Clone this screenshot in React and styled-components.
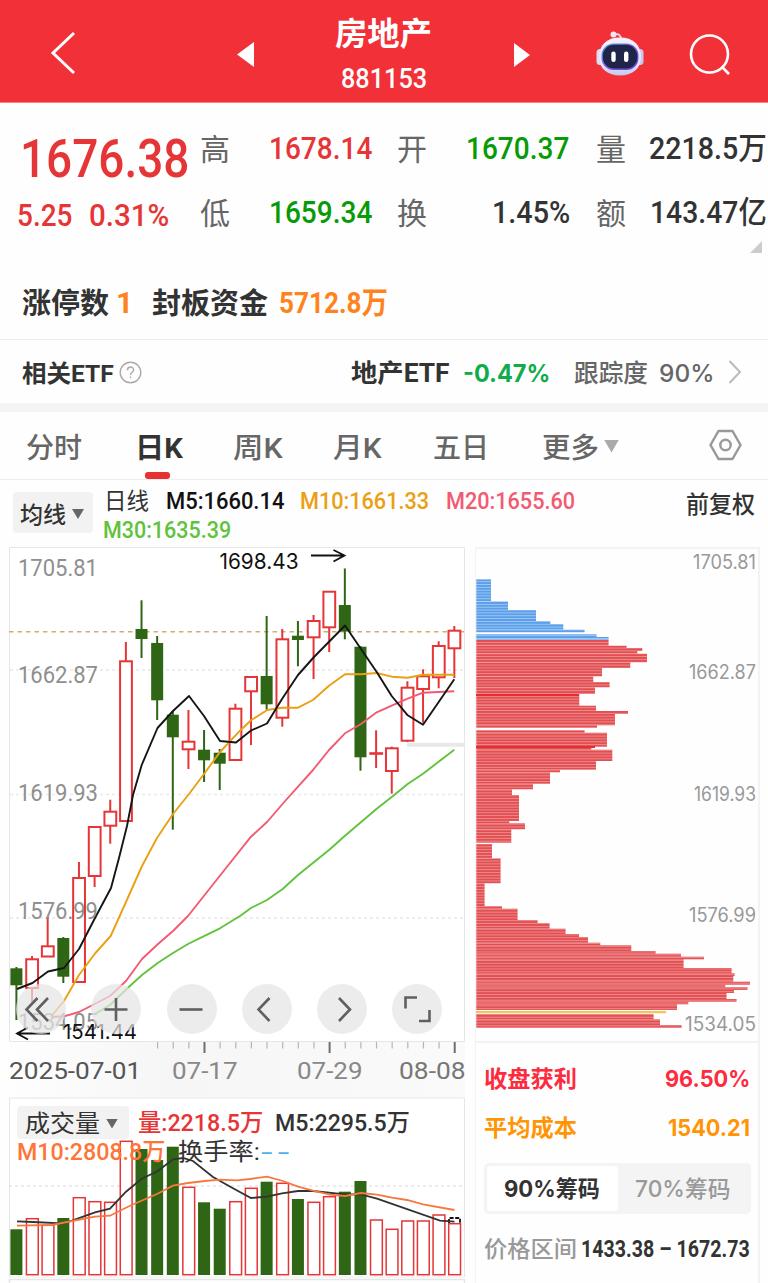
import React, { useLayoutEffect, useRef, useState } from "react"
import styled, { createGlobalStyle } from "styled-components"

const DIN = `Roboto, "Noto Sans CJK SC", sans-serif`
const ROUND = `Inter, "Noto Sans CJK SC", sans-serif`

const GlobalStyle = createGlobalStyle`
* { box-sizing: border-box; }
body {
  margin: 0;
  background: #fff;
  overflow: hidden;
}
svg { display: block; overflow: visible; }
`

const Page = styled.div`
width: 768px;
height: 1283px;
overflow: hidden;
background: #fefefe;
font-family: ${DIN};
`

const FitBox = styled.span`
display: block;
flex: none;
width: ${p => p.$w}px;
height: ${p => p.$size}px;
margin-left: ${p => p.$ml || 0}px;
margin-top: ${p => p.$mt || 0}px;
line-height: ${p => p.$size}px;
font-family: ${p => (p.$round ? ROUND : DIN)};
font-size: ${p => p.$size}px;
font-weight: ${p => p.$weight || 400};
letter-spacing: ${p => p.$gap || 0}px;
color: ${p => p.$color || "#333"};
white-space: nowrap;
`
const FitInner = styled.span`
display: inline-block;
transform-origin: 0 50%;
`

// squeezes or widens a label so it always fills its slot
function Fit({ w, size, weight, color, round, ml, mt, gap, children }) {
  const ref = useRef(null)
  const [scale, setScale] = useState(1)

  useLayoutEffect(() => {
    if (ref.current.offsetWidth) {
      setScale(w / ref.current.offsetWidth)
    }
  }, [w, children])

  return (
    <FitBox $w={w} $size={size} $weight={weight} $color={color} $round={round} $ml={ml} $mt={mt} $gap={gap}>
      <FitInner ref={ref} style={{ transform: `scaleX(${scale})` }}>{children}</FitInner>
    </FitBox>
  )
}

/* ---------- header ---------- */

const Header = styled.header`
display: grid;
grid-template-columns: 237px 17px 260px 16px 66px 48px 46px 42px;
align-items: center;
height: 103px;
background: #f23038;
border-bottom: 1px solid #f9848a;
`
const BackCell = styled.div`
padding: 4px 0 0 51px;
`
const ArrowCell = styled.div`
padding-top: 7px;
`
const Titles = styled.div`
display: flex;
flex-direction: column;
align-items: center;
gap: 16px;
padding: 9px 2px 0 0;
`
const RobotCell = styled.div`
grid-column: 6;
padding-top: 4px;
`
const SearchCell = styled.div`
grid-column: 8;
padding-top: 8px;
`

function Robot() {
  return (
    <svg width="48" height="46" viewBox="0 0 48 46">
      <defs>
        <linearGradient id="shell" x1="0" y1="0" x2="0" y2="1">
          <stop offset="0" stopColor="#f4f2ff" />
          <stop offset="0.7" stopColor="#e4e4fa" />
          <stop offset="1" stopColor="#c3c8ee" />
        </linearGradient>
        <linearGradient id="rim" x1="0" y1="0" x2="1" y2="1">
          <stop offset="0" stopColor="#45a8d8" />
          <stop offset="0.5" stopColor="#8a5be8" />
          <stop offset="1" stopColor="#5a3fd0" />
        </linearGradient>
      </defs>
      <path d="M18 4.5Q25 2.5 25 10" fill="none" stroke="#e9dff3" strokeWidth="1.8" />
      <circle cx="17.5" cy="4.5" r="3" fill="#f3e6f2" />
      <rect x="0.5" y="19" width="7" height="16" rx="3.5" fill="#dcdcf6" />
      <rect x="40.5" y="19" width="7" height="16" rx="3.5" fill="#c7c9f1" />
      <path d="M24 7.5C37 7.5 45 15 45 27C45 39 36 45.5 24 45.5C12 45.5 3 39 3 27C3 15 11 7.5 24 7.5Z" fill="url(#shell)" />
      <rect x="5.5" y="13.5" width="37" height="26.5" rx="12" fill="url(#rim)" />
      <rect x="6.8" y="14.8" width="34.4" height="23.6" rx="11" fill="#1e2548" />
      <rect x="15.3" y="21.5" width="4.4" height="10.5" rx="2.2" fill="#fff" />
      <rect x="28" y="21.5" width="4.4" height="10.5" rx="2.2" fill="#fff" />
    </svg>
  )
}

/* ---------- quote ---------- */

const Quote = styled.section`
display: grid;
grid-template-columns: 200px 568px;
height: 154px;
padding-top: 15px;
`
const PriceBlock = styled.div`
padding: 15px 0 0 20px;
`
const ChangeRow = styled.div`
display: flex;
margin: 14px 0 0 -3px;
`
const Figures = styled.div`
display: grid;
grid-template-columns: 30px 143px 24px 30px 143px 26px 30px 142px;
grid-template-rows: 64px 64px;
align-items: center;
`
const Value = styled.div`
grid-column: span ${p => (p.$last ? 1 : 2)};
display: flex;
justify-content: flex-end;
padding-right: ${p => (p.$last ? 1 : p.$pad)}px;
padding-bottom: 3px;
`
const Corner = styled.div`
width: 12px;
height: 12px;
margin: -16px 0 4px 750px;
background: #ccc;
clip-path: polygon(100% 0, 100% 100%, 0 100%);
`
const LimitRow = styled.div`
display: flex;
align-items: center;
height: 83px;
padding: 9px 0 0 22px;
border-bottom: 1px solid #eee;
`
const EtfRow = styled.div`
display: flex;
align-items: center;
height: 63px;
padding: 4px 0 0 22px;
`
const EtfIcon = styled.div`
margin-left: ${p => p.$ml}px;
margin-bottom: 3px;
`
const Band = styled.div`
height: 9px;
background: #f4f4f4;
`

/* ---------- tabs ---------- */

const Tabs = styled.nav`
display: flex;
align-items: stretch;
height: 68px;
border-bottom: 1px solid #eee;
`
const Tab = styled.div`
position: relative;
display: flex;
align-items: center;
margin-left: ${p => p.$ml}px;
padding-top: 6px;
`
const Settings = styled.div`
display: flex;
align-items: center;
margin-left: 90px;
padding-bottom: 1px;
`
const Underline = styled.i`
position: absolute;
left: 10px;
bottom: 0;
width: 25px;
height: 7px;
border-radius: 3px;
background: #e93030;
`
const Caret = styled.i`
width: ${p => p.$s}px;
height: ${p => p.$s - 2}px;
margin-left: ${p => p.$ml}px;
margin-bottom: ${p => p.$mb || 0}px;
background: ${p => p.$color};
clip-path: polygon(0 0, 100% 0, 50% 100%);
`

/* ---------- legend ---------- */

const Legend = styled.div`
display: grid;
grid-template-columns: 104px 582px 82px;
height: 67px;
`
const Picker = styled.div`
display: flex;
align-items: center;
width: 80px;
height: 41px;
margin: 12px 0 0 13px;
padding: 3px 0 0 7px;
border-radius: 4px;
background: #f2f2f2;
`
const Averages = styled.div`
padding-top: 7px;
`
const Line = styled.div`
display: flex;
align-items: center;
height: ${p => p.$h}px;
`
const Adjust = styled.div`
padding-top: 13px;
`

/* ---------- charts ---------- */

const Columns = styled.div`
display: grid;
grid-template-columns: 475px 285px;
height: 737px;
`
const Left = styled.div`
padding-left: 8px;
`
const KChart = styled.div`
position: relative;
height: 495px;
`
const Tools = styled.div`
position: absolute;
left: 8px;
top: 437px;
display: flex;
gap: 25.3px;
`
const Tool = styled.button`
display: flex;
align-items: center;
justify-content: center;
width: 50px;
height: 50px;
padding: 0;
border: none;
border-radius: 50%;
background: rgba(228, 228, 228, 0.72);
`
const Axis = styled.div`
width: 457px;
height: 55px;
background: linear-gradient(90deg, #fefefe 0%, #f6f6f6 35%, #fafafa 100%);
`
const Dates = styled.div`
display: flex;
padding: 2px 0 0 1px;
`
const Volume = styled.div`
position: relative;
height: 187px;
`
const VolumeHead = styled.div`
position: absolute;
left: 9px;
top: 9px;
`
const Chip = styled.div`
display: flex;
align-items: center;
width: 112px;
height: 33px;
padding: 2px 0 0 8px;
border-radius: 4px;
background: #f2f2f2;
`

const Right = styled.div`
border: 2px solid #f3f3f3;
border-bottom: none;
border-left-width: 1px;
`
const Stats = styled.div`
padding: 21px 8px 0 8px;
border-top: 2px solid #f3f3f3;
`
const StatRow = styled.div`
display: flex;
align-items: center;
justify-content: space-between;
height: ${p => p.$h || 30}px;
margin-bottom: ${p => p.$mb || 0}px;
`
const Segments = styled.div`
display: flex;
width: 267px;
height: 51px;
padding: 3px;
border-radius: 5px;
background: #f4f4f4;
`
const Segment = styled.div`
display: flex;
flex: 1;
align-items: center;
justify-content: center;
padding-top: 2px;
border-radius: 3px;
background: ${p => (p.$active ? "#fff" : "none")};
`

const RED = "#e53536"
const GREEN = "#2f6615"
const xAt = i => 16.4 + i * 15.64

// colour, body top, body bottom, high, low
const candles = [
  ["g", 968.3, 985.3, 967, 1020], ["r", 959.3, 988, 956, 1002], ["r", 946.3, 956.5, 917, 956],
  ["g", 938, 976.7, 937, 983], ["r", 878, 982, 862, 982], ["r", 827, 876, 827, 887],
  ["r", 811.7, 825.7, 799.7, 843.7], ["r", 661.3, 821, 642, 821], ["g", 629, 639, 600.3, 658],
  ["g", 643, 700.3, 636, 720], ["g", 714.7, 737.3, 711, 829.7], ["r", 741.7, 749.3, 710, 769],
  ["g", 749.7, 760.3, 730, 782], ["g", 752.7, 763.7, 749, 790], ["r", 708.7, 760, 703.7, 760],
  ["r", 677, 691.3, 677, 745], ["g", 676, 704.3, 616, 709.7], ["r", 639.3, 717.7, 629, 726.7],
  ["g", 635.7, 640, 621, 666.3], ["r", 621, 637.3, 615, 679], ["r", 591.7, 627.3, 591, 652],
  ["g", 605, 631.5, 568.5, 639.3], ["g", 646.7, 757.3, 646, 770.7], ["r", 753.2, 753.8, 730.3, 768],
  ["r", 748.3, 771, 746.7, 793.7], ["r", 687.7, 740.7, 681.3, 742], ["r", 676.3, 689, 669.3, 722.7],
  ["r", 646, 677.3, 641.3, 688.3], ["r", 630.7, 648.3, 626, 678],
]

const averages = [
  ["#61c23c", "95,1014 110,1005 128,987.7 142,975 158,962.7 173,953 188,944 203,936.7 220,928.3 240,916 251,908 267,900 282.7,889 298,875 329,850 345,835.7 376.7,808.7 392,796.7 407.7,784 423,773.7 454.3,749.7"],
  ["#f25a72", "51.7,1017 64,1016.3 79,1012 94.7,1004 110,996 126,981 142,959 158,944 173,931 188,916 230,863 251,836.7 267,822 286,800 313,770 329,750 345,733.3 361,724 376.7,712.3 391.7,705.7 407.7,698.7 423,692.7 454.3,691.3"],
  ["#e9a012", "51.7,1015.7 64,1001 79,975 95,953.5 110.7,936 126,902 142,866 157,838 173,814 189,794 204,774 220,752 240,730.7 251,720.3 267.3,710 281.7,707.7 298,707.7 313,700 329,685.7 345,674.3 361,674.3 376.7,673 391.7,676.7 407.7,677.7 423,674.7 454.3,674.7"],
  ["#151515", "17,989 32.5,983 48,971.5 64,968 79,949 95,918 111,888 119,858 127,826 133,795 141.7,765 157.5,728 173,711 189,696 204,716 220,741 236,742.5 251,730.5 267,723.5 282,699 298,675 314,657 345,625.5 361,649 376.7,672 391.7,696 407.7,715.3 423,724.7 438.7,702 454.3,679.3"],
]

const priceLabels = [[1705.81, 576], [1662.87, 682.5], [1619.93, 800.5], [1576.99, 918.5], [1534.05, 1030]]

function CandleChart() {
  return (
    <svg width="460" height="495" viewBox="8 547 460 495">
      <path d="M9.5 1041.5V547.5H464.5V1041.5Z" fill="#fff" stroke="#e6e6e6" />
      {[670, 794.5, 918].map(y => (
        <line key={y} x1="10" x2="464" y1={y} y2={y} stroke="#e9e9e9" strokeWidth="1.5" strokeDasharray="3 3" />
      ))}
      <line x1="407" x2="465" y1="744.7" y2="744.7" stroke="#e9e9e9" strokeWidth="4" />
      <line x1="9" x2="465" y1="631.8" y2="631.8" stroke="#cfae74" strokeWidth="1.6" strokeDasharray="4.5 4" />
      {candles.map(([c, top, bottom, high, low], i) => {
        const x = xAt(i)
        return c === "g" ? (
          <g key={i} fill={GREEN}>
            <rect x={x - 1} y={high} width="2" height={low - high} />
            <rect x={x - 6} y={top} width="12" height={bottom - top} />
          </g>
        ) : (
          <g key={i} stroke={RED} strokeWidth="2" fill="#fff">
            <line x1={x} x2={x} y1={high} y2={low} />
            <rect x={x - 5.8} y={top} width="11.8" height={bottom - top} />
          </g>
        )
      })}
      {averages.map(([color, points]) => (
        <polyline key={color} points={points} fill="none" stroke={color} strokeWidth="1.9" strokeLinejoin="round" />
      ))}
      {priceLabels.map(([v, y]) => (
        <text key={v} x="18" y={y} fill="#8f8f8f" fontFamily={DIN} fontSize="23.5" textLength="80" lengthAdjust="spacingAndGlyphs">{v}</text>
      ))}
      <text x="219.5" y="569" fill="#111" fontFamily={ROUND} fontSize="21" textLength="79" lengthAdjust="spacingAndGlyphs">1698.43</text>
      <path d="M311 555.5H344M333.5 550L344.5 555.5L333.5 561.5" fill="none" stroke="#111" strokeWidth="1.8" />
      <path d="M50 1033.5H18M28 1027.5L17 1033.5L28 1039.5" fill="none" stroke="#111" strokeWidth="1.8" />
      <text x="63" y="1039" fill="#111" fontFamily={ROUND} fontSize="20.5" textLength="74" lengthAdjust="spacingAndGlyphs">1541.44</text>
    </svg>
  )
}

const toolIcons = [
  "M20 2L9 13.5L20 25M9.5 2L-1.5 13.5L9.5 25",
  "M13 2V25M1.5 13.5H24.5",
  "M1.5 13.5H24.5",
  "M16.5 2L5.5 13.5L16.5 25",
  "M10 2L21 13.5L10 25",
  "M13 1.5H1.5V12.5M15 25H25.5V14",
]

function AxisTicks() {
  return (
    <svg width="457" height="15" viewBox="8 1042 457 15">
      {[...Array(20)].map((_, n) => {
        const x = xAt(n + 9)
        const major = n % 8 === 3
        return (
          <line
            key={n}
            x1={x + 0.4}
            x2={x + 0.4}
            y1="1042"
            y2={major ? 1053 : 1048.5}
            stroke={major ? "#6e6e6e" : "#b5b5b5"}
            strokeWidth={major ? 2 : 1.2}
          />
        )
      })}
    </svg>
  )
}

const volumes = [
  ["g", 1229.3], ["r", 1218.7], ["r", 1225.3], ["g", 1218], ["r", 1197.7], ["r", 1201.7],
  ["r", 1202.3], ["r", 1141.3], ["g", 1149], ["g", 1160], ["g", 1146.7], ["r", 1187.3],
  ["g", 1202.3], ["g", 1208.7], ["r", 1201.7], ["r", 1188.3], ["g", 1181.7], ["r", 1183.3],
  ["g", 1199], ["r", 1202.3], ["r", 1196.7], ["g", 1191.7], ["g", 1181], ["r", 1220],
  ["r", 1229.3], ["r", 1221], ["r", 1221], ["r", 1215], ["r", 1223.7],
]

function VolumeChart() {
  return (
    <svg width="460" height="186" viewBox="8 1097 460 186">
      <path d="M9.5 1277V1098H464.5V1277" fill="#fff" stroke="#e6e6e6" />
      <path d="M9.5 1283V1279.5H464.5V1283" fill="none" stroke="#e6e6e6" strokeWidth="1.5" />
      <line x1="9" x2="464" y1="1277" y2="1277" stroke="#eee" />
      <line x1="9" x2="464" y1="1186" y2="1186" stroke="#e6e6e6" strokeWidth="1.3" strokeDasharray="3 3" />
      {volumes.map(([c, top], i) =>
        c === "g" ? (
          <rect key={i} x={xAt(i) - 6} y={top} width="12" height={1275 - top} fill={GREEN} />
        ) : (
          <rect key={i} x={xAt(i) - 5.6} y={top} width="11.8" height={1274.7 - top} fill="#fff" stroke={RED} strokeWidth="1.5" />
        )
      )}
      <path d="M449 1223V1218H460V1223" fill="none" stroke="#111" strokeWidth="1.8" strokeDasharray="4 1.6" />
      <polyline
        points="17,1221.3 33,1222 62,1223.3 72,1220.7 95,1212.3 110,1208.7 126,1191.7 141.7,1178.7 157.5,1171.3 173,1159.3 183,1158 193,1161 213,1177 233,1188.3 251,1198 267,1196.7 282,1193.3 298,1191 313,1191 345,1194.3 361,1194.3 377,1198.7 440,1220.7 454.5,1221.7"
        fill="none" stroke="#333" strokeWidth="1.8"
      />
      <polyline
        points="17,1225.7 52,1225 72,1221 95,1216.7 110,1215.7 130,1205.7 157.5,1193.7 173,1185.7 188,1183 205,1181 220,1179.7 237,1180.3 250,1179 267,1176.7 283,1181 298,1186.7 313,1190.7 330,1194.7 345,1196 361,1193 377,1194.7 392,1197.7 407,1200 423,1204.3 454.5,1210"
        fill="none" stroke="#f5793f" strokeWidth="1.8"
      />
    </svg>
  )
}

// start, end, width of each cost band
const chips = [
  [640, 645.7, 132.3], [645.7, 648, 150.3], [648, 651, 166], [651, 653.7, 161],
  [653.7, 662.3, 170.7], [662.3, 668, 154], [668, 676.3, 125.7], [676.3, 682, 117],
  [682, 687.3, 133.3], [687.3, 694, 118.7], [694, 705.7, 103], [705.7, 711, 119.7],
  [711, 714, 151.7], [714, 725.3, 138.7], [725.3, 728, 120.7], [730, 732.7, 108.3],
  [732.7, 746.7, 130.7], [746.7, 749.7, 115], [749.7, 761, 136], [761, 769.7, 119.7],
  [769.7, 772.3, 83.7], [772.3, 783.7, 73.7], [783.7, 789.3, 56.7], [789.3, 795, 35.7],
  [795, 821, 42.7], [821, 823.3, 33], [823.3, 829.3, 48.7], [829.3, 842.7, 35],
  [844, 858.3, 15.7], [858.3, 883.3, 24.3], [883.3, 906, 8.3], [906, 908.7, 25.7],
  [908.7, 920, 41.3], [920, 923, 61.3], [923, 928.7, 73.3], [928.7, 934, 89.3],
  [934, 937, 102.7], [937, 942.7, 111.7], [942.7, 945.3, 124], [945.3, 951, 155],
  [951, 953.7, 179.3], [953.7, 956.7, 204.7], [956.7, 959.3, 227.7], [959.3, 968, 207.3],
  [968, 973.3, 255.3], [973.3, 976, 258.3], [976, 981.7, 257], [981.7, 984.7, 273.7],
  [984.7, 987.3, 249], [987.3, 990, 271.3], [990, 993, 257.7], [993, 999, 250.3],
  [999, 1001.7, 260.3], [1001.7, 1004.3, 212], [1004.3, 1010, 200.7],
  [1014, 1019.3, 177.3], [1019.3, 1025, 183.7], [1025, 1027.7, 205.3],
]
const trapped = [
  [579.3, 601.3, 14.7], [601.3, 610, 31.7], [610, 621, 59.7], [621, 624, 74],
  [624, 629.7, 87], [629.7, 632.3, 108.3], [634.3, 637, 120.3], [637, 639.7, 132.3],
]
const chipLabels = [[1705.81, 569, 694], [1662.87, 679, 690], [1619.93, 801, 695], [1576.99, 922, 690], [1534.05, 1031, 686]]

function ChipChart() {
  return (
    <svg width="282" height="492" viewBox="476 549 282 492">
      <defs>
        <pattern id="up" width="10" height="2.84" y="640" patternUnits="userSpaceOnUse">
          <rect width="10" height="2.84" fill="#f08c8c" />
          <rect width="10" height="1.9" fill="#e24f53" />
        </pattern>
        <pattern id="down" width="10" height="2.84" y="579.3" patternUnits="userSpaceOnUse">
          <rect width="10" height="2.84" fill="#9fc8f6" />
          <rect width="10" height="1.9" fill="#5b9ee9" />
        </pattern>
      </defs>
      {trapped.map(([a, b, w]) => <rect key={a} x="476.3" y={a} width={w} height={b - a} fill="url(#down)" />)}
      {chips.map(([a, b, w]) => <rect key={a} x="476.3" y={a} width={w} height={b - a} fill="url(#up)" />)}
      <rect x="476" y="694" width="103" height="2" fill="#e62e30" />
      <rect x="476" y="746" width="119" height="2" fill="#e62e30" />
      <rect x="476" y="1011" width="190" height="2.3" fill="#f5c55c" />
      {chipLabels.map(([v, y, x]) => (
        <text key={v} x={x - 1} y={y} fill="#999" fontFamily={ROUND} fontSize="19.5" textLength={757 - x} lengthAdjust="spacingAndGlyphs">{v}</text>
      ))}
    </svg>
  )
}

function App() {
  return (
    <Page>
      <GlobalStyle />
      <Header>
        <BackCell>
          <svg width="25" height="42" viewBox="0 0 25 42"><path d="M23 1L2 21L23 41" fill="none" stroke="#fff" strokeWidth="3" /></svg>
        </BackCell>
        <ArrowCell>
          <svg width="17" height="25"><path d="M17 0V25L0 12.5Z" fill="#fff" /></svg>
        </ArrowCell>
        <Titles>
          <Fit w={97} size={32} weight={700} color="#fff">房地产</Fit>
          <Fit w={86} size={27} weight={500} color="#fff" ml={1}>881153</Fit>
        </Titles>
        <ArrowCell>
          <svg width="16" height="24"><path d="M0 0V24L16 12Z" fill="#fff" /></svg>
        </ArrowCell>
        <RobotCell><Robot /></RobotCell>
        <SearchCell>
          <svg width="42" height="42" viewBox="0 0 42 42" fill="none" stroke="#fff" strokeWidth="2.6">
            <circle cx="19.5" cy="20" r="18.5" />
            <path d="M31.5 32.5L39 40" />
          </svg>
        </SearchCell>
      </Header>

      <Quote>
        <PriceBlock>
          <Fit w={169} size={53} weight={500} color={RED}>1676.38</Fit>
          <ChangeRow>
            <Fit w={55} size={31} weight={500} color={RED}>5.25</Fit>
            <Fit w={80} size={31} weight={500} color={RED} ml={17}>0.31%</Fit>
          </ChangeRow>
        </PriceBlock>
        <Figures>
          <Fit w={30} size={30} color="#666">高</Fit>
          <Value $pad={25}><Fit w={103} size={31} weight={500} color={RED}>1678.14</Fit></Value>
          <Fit w={30} size={30} color="#666">开</Fit>
          <Value $pad={27}><Fit w={103} size={31} weight={500} color="#089b08">1670.37</Fit></Value>
          <Fit w={30} size={30} color="#666">量</Fit>
          <Value $last><Fit w={118} size={31} weight={500}>2218.5万</Fit></Value>
          <Fit w={30} size={30} color="#666">低</Fit>
          <Value $pad={25}><Fit w={103} size={31} weight={500} color="#089b08">1659.34</Fit></Value>
          <Fit w={30} size={30} color="#666">换</Fit>
          <Value $pad={26}><Fit w={78} size={31} weight={500}>1.45%</Fit></Value>
          <Fit w={30} size={30} color="#666">额</Fit>
          <Value $last><Fit w={117} size={31} weight={500}>143.47亿</Fit></Value>
        </Figures>
      </Quote>
      <Corner />
      <LimitRow>
        <Fit w={87} size={29} weight={700} mt={4}>涨停数</Fit>
        <Fit w={17} size={30} weight={700} color="#ff831c" ml={7}>1</Fit>
        <Fit w={116} size={29} weight={700} ml={19} mt={4}>封板资金</Fit>
        <Fit w={109} size={30} weight={700} color="#ff831c" ml={11}>5712.8万</Fit>
      </LimitRow>
      <EtfRow>
        <Fit w={92} size={24} weight={700}>相关ETF</Fit>
        <EtfIcon $ml={5}>
          <svg width="23" height="23" viewBox="0 0 23 23" fill="none" stroke="#aaa" strokeWidth="1.4">
            <circle cx="11.5" cy="11.5" r="10.3" />
            <path d="M8.4 9.2C8.4 5 14.6 5 14.6 9C14.6 11.3 11.5 11.3 11.5 14M11.5 15.6V17.3" />
          </svg>
        </EtfIcon>
        <Fit w={99} size={25} weight={700} ml={209}>地产ETF</Fit>
        <Fit w={87} size={24} weight={700} color="#10ac4c" round ml={13}>-0.47%</Fit>
        <Fit w={74} size={25} weight={500} color="#666" ml={24}>跟踪度</Fit>
        <Fit w={55} size={24} weight={500} color="#666" round ml={11}>90%</Fit>
        <EtfIcon $ml={14}>
          <svg width="14" height="24" viewBox="0 0 14 24"><path d="M1.5 1L12 12L1.5 23" fill="none" stroke="#bbb" strokeWidth="2" /></svg>
        </EtfIcon>
      </EtfRow>
      <Band />
      <Tabs>
        <Tab $ml={26}><Fit w={56} size={28} weight={500} color="#666">分时</Fit></Tab>
        <Tab $ml={53}><Fit w={48} size={28} weight={700}>日K</Fit><Underline /></Tab>
        <Tab $ml={50}><Fit w={50} size={28} weight={500} color="#666">周K</Fit></Tab>
        <Tab $ml={50}><Fit w={49} size={28} weight={500} color="#666">月K</Fit></Tab>
        <Tab $ml={51}><Fit w={56} size={28} weight={500} color="#666">五日</Fit></Tab>
        <Tab $ml={53}>
          <Fit w={57} size={28} weight={500} color="#666">更多</Fit>
          <Caret $s={15} $ml={5} $mb={5} $color="#aaa" />
        </Tab>
        <Settings>
          <svg width="33" height="32" viewBox="0 0 33 32" fill="none" stroke="#999" strokeWidth="2.5">
            <path d="M9.5 2H23.5L31.5 16L23.5 30H9.5L1.5 16Z" strokeLinejoin="round" />
            <circle cx="16.5" cy="16" r="5.2" />
          </svg>
        </Settings>
      </Tabs>
      <Legend>
        <Picker>
          <Fit w={46} size={23} weight={500} mt={2}>均线</Fit>
          <Caret $s={12} $ml={6} $color="#666" />
        </Picker>
        <Averages>
          <Line $h={28}>
            <Fit w={45} size={23} mt={1}>日线</Fit>
            <Fit w={118} size={24} weight={500} color="#111" ml={17}>M5:1660.14</Fit>
            <Fit w={129} size={24} weight={500} color="#e9a012" ml={16}>M10:1661.33</Fit>
            <Fit w={129} size={24} weight={500} color="#f25a72" ml={17}>M20:1655.60</Fit>
          </Line>
          <Line $h={29}><Fit w={128} size={24} weight={500} color="#61c23c" ml={-1}>M30:1635.39</Fit></Line>
        </Averages>
        <Adjust><Fit w={69} size={24} weight={500}>前复权</Fit></Adjust>
      </Legend>

      <Columns>
        <Left>
          <KChart>
            <CandleChart />
            <Tools>
              {toolIcons.map(d => (
                <Tool key={d}>
                  <svg width="27" height="27" viewBox="0 0 27 27">
                    <path d={d} fill="none" stroke="#606060" strokeWidth="2.6" />
                  </svg>
                </Tool>
              ))}
            </Tools>
          </KChart>
          <Axis>
            <AxisTicks />
            <Dates>
              <Fit w={132} size={24} color="#555">2025-07-01</Fit>
              <Fit w={66} size={24} color="#888" ml={31}>07-17</Fit>
              <Fit w={66} size={24} color="#888" ml={59}>07-29</Fit>
              <Fit w={67} size={24} color="#777" ml={36}>08-08</Fit>
            </Dates>
          </Axis>
          <Volume>
            <VolumeChart />
            <VolumeHead>
              <Line $h={33}>
                <Chip>
                  <Fit w={75} size={24}>成交量</Fit>
                  <Caret $s={12} $ml={6} $color="#666" />
                </Chip>
                <Fit w={125} size={24} color={RED} weight={500} ml={9}>量:2218.5万</Fit>
                <Fit w={135} size={24} weight={500} ml={12}>M5:2295.5万</Fit>
              </Line>
              <Line $h={26}>
                <Fit w={148} size={24} weight={500} color="#ff7437">M10:2808.8万</Fit>
                <Fit w={82} size={24} ml={13}>换手率:</Fit>
                <Fit w={33} size={24} color="#4faef0" ml={1} gap={3}>--</Fit>
              </Line>
            </VolumeHead>
          </Volume>
        </Left>
        <Right>
          <ChipChart />
          <Stats>
            <StatRow $mb={19}>
              <Fit w={93} size={23} weight={700} color="#fd2b3d">收盘获利</Fit>
              <Fit w={85} size={23} weight={700} color="#fd2b3d" round>96.50%</Fit>
            </StatRow>
            <StatRow $mb={20}>
              <Fit w={93} size={23} weight={700} color="#ff9505">平均成本</Fit>
              <Fit w={82} size={23} weight={700} color="#ff9505" round>1540.21</Fit>
            </StatRow>
            <Segments>
              <Segment $active><Fit w={96} size={23} weight={700} round>90%筹码</Fit></Segment>
              <Segment><Fit w={95} size={23} weight={500} color="#999" round>70%筹码</Fit></Segment>
            </Segments>
            <StatRow $h={70}>
              <Fit w={93} size={23} weight={500} color="#999">价格区间</Fit>
              <Fit w={169} size={23} weight={700}>1433.38 – 1672.73</Fit>
            </StatRow>
          </Stats>
        </Right>
      </Columns>
    </Page>
  )
}

export default App
